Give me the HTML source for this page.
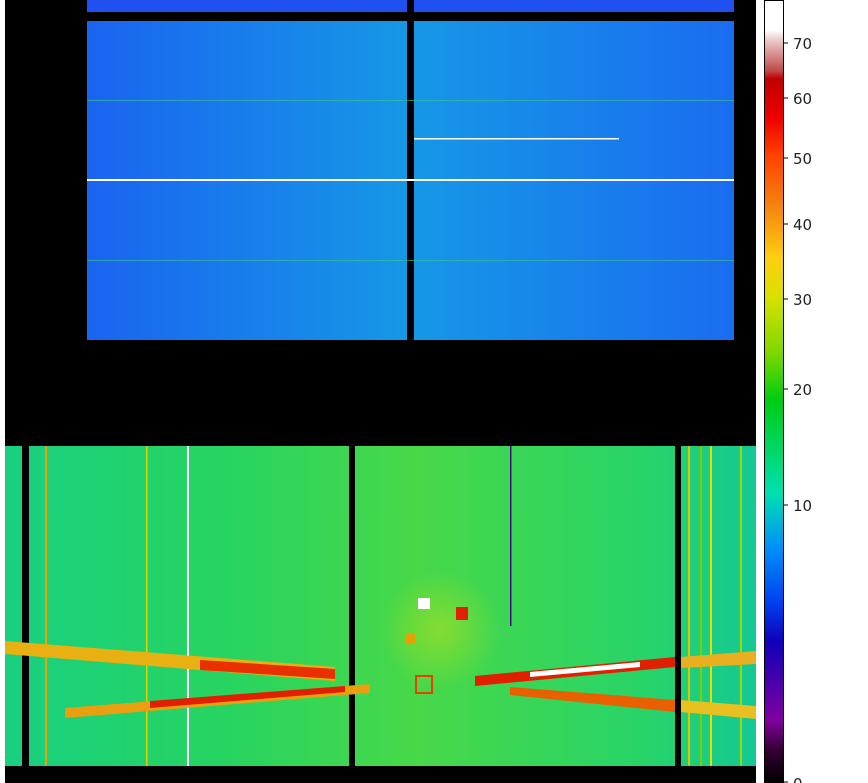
<!DOCTYPE html>
<html><head><style>
html,body{margin:0;padding:0;background:#fff;width:868px;height:783px;overflow:hidden;font-family:"DejaVu Sans","Liberation Sans",sans-serif}
</style></head><body>
<svg width="868" height="783" xmlns="http://www.w3.org/2000/svg" style="position:absolute;left:0;top:0">
<defs>
<linearGradient id="cb" x1="0" y1="0" x2="0" y2="1">
<stop offset="0" stop-color="#ffffff"/>
<stop offset="0.038" stop-color="#ffffff"/>
<stop offset="0.05" stop-color="#eccccc"/>
<stop offset="0.09" stop-color="#c04848"/>
<stop offset="0.1" stop-color="#c00000"/>
<stop offset="0.15" stop-color="#ee0000"/>
<stop offset="0.2" stop-color="#ff4400"/>
<stop offset="0.26" stop-color="#f58010"/>
<stop offset="0.33" stop-color="#fcd010"/>
<stop offset="0.38" stop-color="#d8e000"/>
<stop offset="0.45" stop-color="#80d800"/>
<stop offset="0.51" stop-color="#00cc10"/>
<stop offset="0.63" stop-color="#00e0b0"/>
<stop offset="0.7" stop-color="#0090f8"/>
<stop offset="0.77" stop-color="#0040f0"/>
<stop offset="0.82" stop-color="#1000b8"/>
<stop offset="0.92" stop-color="#8000a0"/>
<stop offset="0.96" stop-color="#300030"/>
<stop offset="1" stop-color="#000000"/>
</linearGradient>
<linearGradient id="top" x1="0" y1="0" x2="1" y2="0">
<stop offset="0" stop-color="#1a64f0"/>
<stop offset="0.5" stop-color="#1698e6"/>
<stop offset="1" stop-color="#1a6cf0"/>
</linearGradient>
<linearGradient id="bot" x1="0" y1="0" x2="1" y2="0">
<stop offset="0" stop-color="#18d080"/>
<stop offset="0.3" stop-color="#28d460"/>
<stop offset="0.55" stop-color="#48d848"/>
<stop offset="0.85" stop-color="#28d468"/>
<stop offset="1" stop-color="#14c894"/>
</linearGradient>
<radialGradient id="glow"><stop offset="0" stop-color="#b0e020" stop-opacity="0.6"/><stop offset="1" stop-color="#b0e020" stop-opacity="0"/></radialGradient>
</defs>
<rect x="5" y="0" width="751" height="783" fill="#000"/>
<rect x="87" y="0" width="647" height="12" fill="#2050f0"/>
<rect x="87" y="21" width="647" height="319" fill="url(#top)"/>
<rect x="407" y="0" width="7" height="341" fill="#000"/>
<rect x="87" y="179" width="647" height="2" fill="#ffffff"/>
<rect x="414" y="138" width="205" height="1.5" fill="#ffffff"/>
<rect x="87" y="100" width="647" height="1" fill="#40c890" opacity="0.6"/>
<rect x="87" y="260" width="647" height="1" fill="#40c890" opacity="0.6"/>
<rect x="5" y="446" width="751" height="320" fill="url(#bot)"/>
<rect x="22" y="446" width="7" height="320" fill="#000"/>
<rect x="349" y="446" width="6" height="320" fill="#000"/>
<rect x="675" y="446" width="6" height="320" fill="#000"/>
<rect x="187" y="446" width="2" height="320" fill="#fff"/>
<rect x="45" y="446" width="2" height="320" fill="#f0a000"/>
<rect x="146" y="446" width="1.5" height="320" fill="#e0d000"/>
<rect x="510" y="446" width="1.5" height="180" fill="#401080"/>
<rect x="688" y="446" width="2" height="320" fill="#e8c000"/>
<rect x="700" y="446" width="2" height="320" fill="#80d000"/>
<rect x="710" y="446" width="2" height="320" fill="#e8e000"/>
<rect x="740" y="446" width="2" height="320" fill="#a0d800"/>
<circle cx="440" cy="630" r="60" fill="url(#glow)"/>
<polygon points="5,641 335,667 335,681 5,654" fill="#e8b010"/>
<polygon points="200,660 335,669 335,679 200,670" fill="#e83000"/>
<polygon points="65,708 370,684 370,693 65,718" fill="#e8a010"/>
<polygon points="150,701 345,686 345,692 150,708" fill="#e02000"/>
<polygon points="475,676 675,657 675,667 475,686" fill="#e02000"/>
<polygon points="530,672 640,662 640,667 530,677" fill="#ffffff"/>
<polygon points="681,657 756,651 756,664 681,668" fill="#e8b020"/>
<polygon points="510,687 675,700 675,712 510,695" fill="#e86000"/>
<polygon points="681,700 756,706 756,719 681,712" fill="#e8c020"/>
<rect x="418" y="598" width="12" height="11" fill="#fff"/>
<rect x="456" y="607" width="12" height="13" fill="#e02000"/>
<rect x="405" y="633" width="10" height="11" fill="#e8a000"/>
<rect x="416" y="676" width="16" height="17" fill="none" stroke="#e84000" stroke-width="2"/>
<rect x="764.5" y="0.5" width="19" height="782" fill="url(#cb)" stroke="#000" stroke-width="1"/>
<g stroke="#000" stroke-width="1">
<line x1="784" y1="43" x2="788" y2="43"/><line x1="784" y1="98" x2="788" y2="98"/>
<line x1="784" y1="158" x2="788" y2="158"/><line x1="784" y1="224" x2="788" y2="224"/>
<line x1="784" y1="299" x2="788" y2="299"/><line x1="784" y1="389" x2="788" y2="389"/>
<line x1="784" y1="505" x2="788" y2="505"/><line x1="784" y1="782" x2="788" y2="782"/>
</g>
<g font-family="DejaVu Sans, Liberation Sans, sans-serif" font-size="15" fill="#222">
<text x="793" y="49">70</text><text x="793" y="104">60</text><text x="793" y="164">50</text>
<text x="793" y="230">40</text><text x="793" y="305">30</text><text x="793" y="395">20</text>
<text x="793" y="511">10</text><text x="793" y="789">0</text>
</g>
</svg>
</body></html>
